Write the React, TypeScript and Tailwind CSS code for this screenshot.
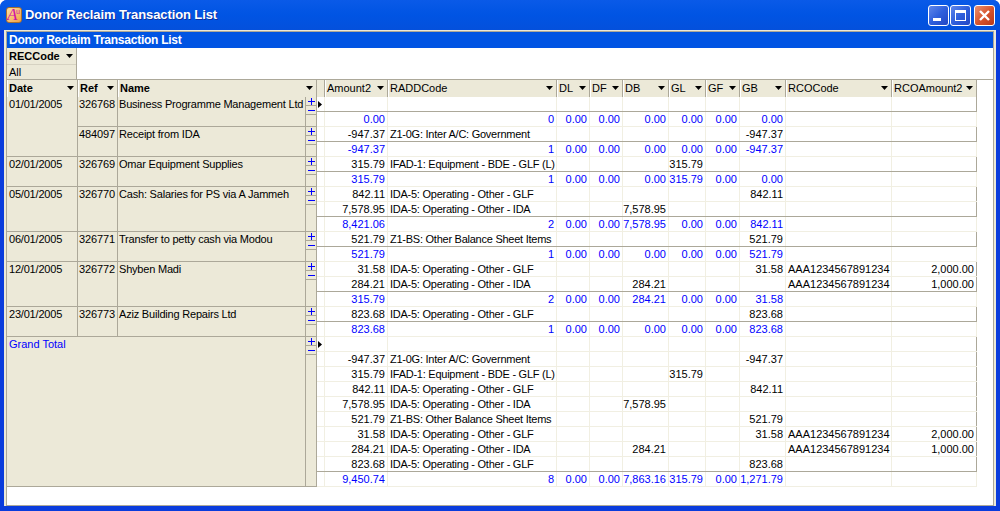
import React from "react";

const FONT = "font-['Liberation_Sans',Arial,sans-serif]";

const COLS = [
  { name: "Amount2", w: "w-[63px]", r: true },
  { name: "RADDCode", w: "w-[169px]", r: false, tight: true },
  { name: "DL", w: "w-[33px]", r: true },
  { name: "DF", w: "w-[33px]", r: true },
  { name: "DB", w: "w-[46px]", r: true },
  { name: "GL", w: "w-[37px]", r: true },
  { name: "GF", w: "w-[34px]", r: true },
  { name: "GB", w: "w-[46px]", r: true },
  { name: "RCOCode", w: "w-[106px]", r: false },
  { name: "RCOAmount2", w: "w-[85px]", r: true },
];

type Row = { c: string[]; total?: boolean; dark?: boolean; mark?: boolean };

const d = (a = "", b = "", db = "", gl = "", gb = "", rco = "", amt = "") => [a, b, "", "", db, gl, "", gb, rco, amt];
const t = (a: string, n: string, db: string, gl: string, gf: string, gb: string, dl = "0.00", df = "0.00") => [a, n, dl, df, db, gl, gf, gb, "", ""];

const Z1 = "Z1-0G: Inter A/C: Government";
const IFAD = "IFAD-1: Equipment - BDE - GLF (L)";
const GLF = "IDA-5: Operating - Other - GLF";
const IDA = "IDA-5: Operating - Other - IDA";
const BS = "Z1-BS: Other Balance Sheet Items";
const AAA = "AAA1234567891234";

const ROWS: Row[] = [
  { c: d(), dark: true, mark: true },
  { c: t("0.00", "0", "0.00", "0.00", "0.00", "0.00"), total: true },
  { c: d("-947.37", Z1, "", "", "-947.37"), dark: true },
  { c: t("-947.37", "1", "0.00", "0.00", "0.00", "-947.37"), total: true },
  { c: d("315.79", IFAD, "", "315.79"), dark: true },
  { c: t("315.79", "1", "0.00", "315.79", "0.00", "0.00"), total: true },
  { c: d("842.11", GLF, "", "", "842.11") },
  { c: d("7,578.95", IDA, "7,578.95"), dark: true },
  { c: t("8,421.06", "2", "7,578.95", "0.00", "0.00", "842.11"), total: true },
  { c: d("521.79", BS, "", "", "521.79"), dark: true },
  { c: t("521.79", "1", "0.00", "0.00", "0.00", "521.79"), total: true },
  { c: d("31.58", GLF, "", "", "31.58", AAA, "2,000.00") },
  { c: d("284.21", IDA, "284.21", "", "", AAA, "1,000.00"), dark: true },
  { c: t("315.79", "2", "284.21", "0.00", "0.00", "31.58"), total: true },
  { c: d("823.68", GLF, "", "", "823.68"), dark: true },
  { c: t("823.68", "1", "0.00", "0.00", "0.00", "823.68"), total: true },
  { c: d(), mark: true },
  { c: d("-947.37", Z1, "", "", "-947.37") },
  { c: d("315.79", IFAD, "", "315.79") },
  { c: d("842.11", GLF, "", "", "842.11") },
  { c: d("7,578.95", IDA, "7,578.95") },
  { c: d("521.79", BS, "", "", "521.79") },
  { c: d("31.58", GLF, "", "", "31.58", AAA, "2,000.00") },
  { c: d("284.21", IDA, "284.21", "", "", AAA, "1,000.00") },
  { c: d("823.68", GLF, "", "", "823.68"), dark: true },
  { c: t("9,450.74", "8", "7,863.16", "315.79", "0.00", "1,271.79"), total: true },
];

const GROUPS = [
  { date: "01/01/2005", refs: [{ ref: "326768", name: "Business Programme Management Ltd", h: "h-[30px]" }, { ref: "484097", name: "Receipt from IDA", h: "h-[30px]" }] },
  { date: "02/01/2005", refs: [{ ref: "326769", name: "Omar Equipment Supplies", h: "h-[30px]" }] },
  { date: "05/01/2005", refs: [{ ref: "326770", name: "Cash: Salaries for PS via A Jammeh", h: "h-[45px]" }] },
  { date: "06/01/2005", refs: [{ ref: "326771", name: "Transfer to petty cash via Modou", h: "h-[30px]" }] },
  { date: "12/01/2005", refs: [{ ref: "326772", name: "Shyben Madi", h: "h-[45px]" }] },
  { date: "23/01/2005", refs: [{ ref: "326773", name: "Aziz Building Repairs Ltd", h: "h-[30px]" }] },
];

function Arrow() {
  return (
    <svg width="7" height="4" viewBox="0 0 7 4" className="shrink-0">
      <path d="M0 0h7L3.5 4z" fill="#000" />
    </svg>
  );
}

function Head({ name, w, bold }: { name: string; w: string; bold?: boolean }) {
  return (
    <div className={`${w} h-[17px] shrink-0 flex items-center justify-between bg-[#ece9d8] border-l border-l-white border-r border-r-[#aca899] pl-[1px] pr-[3px] pb-[1px] ${bold ? "font-bold" : ""}`}>
      <span className="whitespace-nowrap">{name}</span>
      <Arrow />
    </div>
  );
}

function PlusMinus() {
  return (
    <div className="w-[11px] self-stretch shrink-0 flex flex-col border-r border-r-[#aca899]">
      <div className="h-[9px] border-b border-b-[#aca899] flex items-center justify-center">
        <svg width="7" height="7" viewBox="0 0 7 7"><path d="M0 3h7v1H0zM3 0h1v7H3z" fill="#0000ff" /></svg>
      </div>
      <div className="h-[9px] border-b border-b-[#aca899] flex items-center justify-center">
        <svg width="7" height="7" viewBox="0 0 7 7"><path d="M0 3h7v1H0z" fill="#0000ff" /></svg>
      </div>
    </div>
  );
}

function WinBtn({ close, children }: { close?: boolean; children: React.ReactNode }) {
  return (
    <div className={`w-[21px] h-[21px] rounded-[3px] border border-white flex items-center justify-center ${close ? "bg-gradient-to-br from-[#e8906f] via-[#d8552e] to-[#b8381a]" : "bg-gradient-to-br from-[#5f86ea] via-[#2f5fdc] to-[#2347c4]"}`}>
      {children}
    </div>
  );
}

export default function App() {
  return (
    <div className={`${FONT} w-[1000px] h-[511px] overflow-hidden bg-[#0a3cdc] rounded-t-[7px] flex flex-col text-[11px] leading-[14px] text-black`}>
      {/* Title bar */}
      <div className="h-[30px] shrink-0 flex items-center pl-[6px] pr-[5px] bg-gradient-to-b from-[#0a5ae8] via-[#0054e3] to-[#0450dc]">
        <div className="w-[16px] h-[16px] rounded-[3px] bg-gradient-to-br from-[#fbe0a0] to-[#f0a040] border border-[#a87030] relative overflow-hidden">
          <span className="absolute left-[0px] top-[-1px] font-['Liberation_Serif',serif] italic text-[17px] leading-[16px] text-[#d010a8]">A</span>
          <span className="absolute right-[1px] top-[0px] text-[7px] leading-[7px] text-[#d010a8]">u</span>
        </div>
        <span className="ml-[3px] text-white font-bold text-[13px] tracking-[-0.1px] [text-shadow:1px_1px_0_#0f2f9c]">Donor Reclaim Transaction List</span>
        <div className="ml-auto flex gap-[1px]">
          <WinBtn>
            <div className="w-[8px] h-[3px] bg-white mt-[9px] mr-[4px]" />
          </WinBtn>
          <WinBtn>
            <div className="w-[11px] h-[11px] border border-white border-t-[3px]" />
          </WinBtn>
          <div className="ml-[2px]">
            <WinBtn close>
              <svg width="13" height="13" viewBox="0 0 13 13"><path d="M2 2l9 9M11 2l-9 9" stroke="#fff" strokeWidth="2.4" /></svg>
            </WinBtn>
          </div>
        </div>
      </div>

      {/* Client frame */}
      <div className="flex-1 mx-[4px] mb-[5px] bg-[#ece9d8] pt-[1px] px-[2px] min-h-0 flex">
        <div className="flex-1 border border-[#aca899] bg-white flex flex-col min-h-0 w-[988px]">
          <div className="h-[16px] shrink-0 bg-[#0054e3] text-white font-bold flex items-center pl-[2px] text-[12px] tracking-[-0.25px]">Donor Reclaim Transaction List</div>

          {/* Filter */}
          <div className="h-[32px] shrink-0 border-b border-b-[#aca899]">
            <div className="w-[70px] h-[31px] bg-[#ece9d8] border-r border-r-[#aca899] flex flex-col">
              <div className="h-[17px] flex items-center justify-between pl-[2px] pr-[3px] font-bold border-b border-b-[#d6d2c2]">
                <span>RECCode</span>
                <Arrow />
              </div>
              <div className="flex-1 pl-[2px] flex items-center">All</div>
            </div>
          </div>

          {/* Column heads */}
          <div className="flex shrink-0">
            <Head name="Date" w="w-[71px]" bold />
            <Head name="Ref" w="w-[40px]" bold />
            <Head name="Name" w="w-[199px]" bold />
            <div className="w-[8px] h-[17px] bg-[#ece9d8] border-r border-r-[#aca899]" />
            {COLS.map((c) => (
              <Head key={c.name} name={c.name} w={c.w} />
            ))}
          </div>

          {/* Body */}
          <div className="flex">
            {/* Row headers */}
            <div className="w-[310px] shrink-0 bg-[#ece9d8] flex flex-col">
              {GROUPS.map((g) => (
                <div key={g.date} className="flex">
                  <div className="w-[71px] shrink-0 border-r border-r-[#aca899] border-b border-b-[#aca899] pl-[2px] whitespace-nowrap tracking-[-0.2px]">{g.date}</div>
                  <div className="flex-1 flex flex-col">
                    {g.refs.map((r) => (
                      <div key={r.ref} className={`flex ${r.h} border-b border-b-[#aca899]`}>
                        <div className="w-[40px] shrink-0 border-r border-r-[#aca899] pl-[1px] tracking-[-0.1px]">{r.ref}</div>
                        <div className="w-[188px] shrink-0 border-r border-r-[#aca899] pl-[1px] whitespace-nowrap tracking-[-0.2px]">{r.name}</div>
                        <PlusMinus />
                      </div>
                    ))}
                  </div>
                </div>
              ))}
              <div className="flex border-b border-b-[#aca899] h-[150px]">
                <div className="w-[299px] shrink-0 border-r border-r-[#aca899] pl-[2px] text-[#0000ff]">Grand Total</div>
                <PlusMinus />
              </div>
            </div>

            {/* Data */}
            <div className="flex flex-col">
              {ROWS.map((row, i) => (
                <div key={i} className={`flex h-[15px] border-b ${row.dark ? "border-b-[#aca899]" : "border-b-[#f1efe2]"} ${row.total ? "text-[#0000ff]" : ""}`}>
                  <div className="w-[8px] shrink-0 border-r border-r-[#f1efe2] flex items-center pl-[1px]">
                    {row.mark && (
                      <svg width="4" height="7" viewBox="0 0 4 7"><path d="M0 0l4 3.5L0 7z" fill="#000" /></svg>
                    )}
                  </div>
                  {COLS.map((c, j) => (
                    <div
                      key={c.name}
                      className={`${c.w} shrink-0 whitespace-nowrap border-r ${j === COLS.length - 1 && !row.total ? "border-r-[#aca899]" : "border-r-[#f1efe2]"} ${c.r || row.total ? "text-right pr-[2px]" : "pl-[2px]"} ${c.tight && !row.total ? "tracking-[-0.25px]" : ""}`}
                    >
                      {row.c[j]}
                    </div>
                  ))}
                </div>
              ))}
            </div>
          </div>
        </div>
      </div>
    </div>
  );
}
